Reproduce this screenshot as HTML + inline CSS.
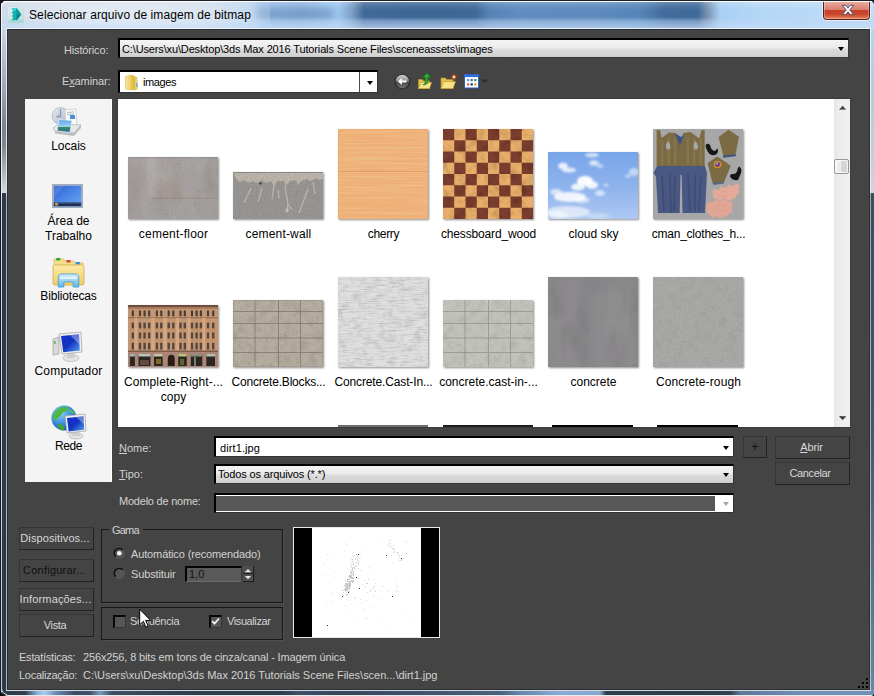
<!DOCTYPE html>
<html lang="pt-BR">
<head>
<meta charset="utf-8">
<title>Selecionar arquivo de imagem de bitmap</title>
<style>
html,body{margin:0;padding:0;}
body{width:874px;height:696px;position:relative;overflow:hidden;background:#444;font-family:"Liberation Sans",sans-serif;font-size:11px;color:#d4d4d4;}
.abs{position:absolute;}
#frame{position:absolute;left:0;top:0;width:874px;height:696px;background:#444;overflow:hidden;}
/* title bar */
#titlebar{position:absolute;left:0;top:0;width:874px;height:30px;
 background:linear-gradient(90deg,#cfdbe8 0px,#d3deea 60px,#cad9ea 200px,#b5d0ee 250px,#98bfea 262px,#8db4e0 300px,#9cc6f0 338px,#7d9fc6 352px,#41699a 364px,#3c6695 430px,#3e6998 475px,#5784b8 490px,#5f8dc0 520px,#5c8abd 600px,#5585b8 640px,#416c9b 665px,#3f6a99 698px,#7a95b3 708px,#a8cff4 720px,#b4d7f6 760px,#c0dcf6 874px);}
#titleshade{position:absolute;left:0;top:0;width:874px;height:30px;
 background:linear-gradient(180deg,rgba(255,255,255,.3) 0px,rgba(255,255,255,.1) 5px,rgba(255,255,255,0) 10px,rgba(190,215,245,0) 17px,rgba(190,215,245,.45) 21px,rgba(195,220,248,.75) 28px);}
#titlesmudge{position:absolute;left:256px;top:8px;width:78px;height:12px;border-radius:6px;background:rgba(90,120,160,.38);filter:blur(3px);}
#titleglow{position:absolute;left:20px;top:2px;width:250px;height:26px;background:radial-gradient(ellipse at center,rgba(255,255,255,.45) 0%,rgba(255,255,255,.3) 50%,rgba(255,255,255,0) 100%);}
#title{position:absolute;left:29px;top:8px;font-size:12px;color:#000;white-space:nowrap;letter-spacing:0.1px;}
/* client */
#client{position:absolute;left:8px;top:30px;width:861px;height:659px;background:#444444;}
.lbl{position:absolute;white-space:nowrap;color:#d2d2d2;font-size:11px;line-height:13px;}
.btn{position:absolute;box-sizing:border-box;border:1px solid #343434;border-right-color:#232323;border-bottom-color:#232323;background:#444;color:#d8d8d8;text-align:center;font-size:11px;white-space:nowrap;}
.combo{position:absolute;box-sizing:border-box;border:2px solid #000;border-right:1px solid #343434;border-bottom:1px solid #343434;}
.arrow{position:absolute;width:0;height:0;border-left:3.5px solid transparent;border-right:3.5px solid transparent;border-top:4px solid #000;}
.sb{position:absolute;left:25px;width:87px;text-align:center;color:#000;font-size:12px;line-height:15px;}
.item{position:absolute;width:105px;text-align:center;color:#000;font-size:12px;line-height:15px;white-space:nowrap;}
.th{position:absolute;box-shadow:1px 1px 2px rgba(0,0,0,.45);}
</style>
</head>
<body>
<div id="frame">
<div id="titlebar"></div>
<div id="titlesmudge"></div>
<div id="titleshade"></div>
<div id="titleglow"></div>
<div id="title">Selecionar arquivo de imagem de bitmap</div>
<div id="client"></div>
<!-- window frame borders -->
<div class="abs" style="left:0;top:30px;width:8px;height:666px;background:linear-gradient(180deg,#c4d4e6 0px,#9aa6b4 60px,#7a838f 95px,#7d8692 115px,#d4dae1 162px,#d8dde3 163px,#2d3a47 163.5px,#2c3946 666px);"></div>
<div class="abs" style="left:869px;top:30px;width:5px;height:666px;background:linear-gradient(180deg,#b5d3f1 0px,#b9c9da 60px,#c3ccd6 120px,#d0d5db 163px,#3e4c5c 163.5px,#45566a 400px,#6a86a5 666px);"></div>
<div class="abs" style="left:0;top:690px;width:874px;height:5px;background:linear-gradient(90deg,#2c3946 0px,#2f3e4e 25px,#8fb6e0 38px,#a9cdf2 45px,#6d8eb3 55px,#3b4c60 75px,#3f5268 90px,#7c9cc0 100px,#3d4f64 112px,#2f3d4c 200px,#2e3c4b 280px,#3e5167 300px,#36465a 340px,#4a617c 500px,#6787ab 520px,#89acd4 560px,#86a8cf 600px,#2f3d4d 606px,#2e3b4a 700px,#32414f 730px,#5c7797 740px,#6f8fb3 800px,#7091b6 874px);"></div>
<!-- inner/outer edge lines -->
<div class="abs" style="left:0;top:0;width:1px;height:696px;background:#1a1d21;"></div>
<div class="abs" style="left:1px;top:2px;width:1px;height:692px;background:linear-gradient(180deg,#f4f8fc 0,#e8edf3 190px,#cfd6de 200px,#c4ccd6 692px);"></div>
<div class="abs" style="left:0;top:0;width:874px;height:1px;background:#20242a;"></div>
<div class="abs" style="left:2px;top:1px;width:872px;height:1px;background:rgba(255,255,255,.85);"></div>
<div class="abs" style="left:6px;top:29px;width:1px;height:661px;background:linear-gradient(180deg,#eef3f8 0,#dfe5ec 160px,#aeb8c4 170px,#a9b4c0 662px);"></div>
<div class="abs" style="left:870px;top:29px;width:1px;height:661px;background:linear-gradient(180deg,#f0f6fc 0,#e6ebf1 162px,#9aa8b8 166px,#b9c6d4 662px);"></div>
<div class="abs" style="left:6px;top:28px;width:865px;height:1px;background:rgba(255,255,255,.7);"></div>
<div class="abs" style="left:6px;top:690px;width:865px;height:1px;background:#d3dbe4;"></div>
<div class="abs" style="left:2px;top:695px;width:872px;height:1px;background:#e6ebf0;"></div>
<div class="abs" style="left:7px;top:29px;width:863px;height:661px;box-sizing:border-box;border:1px solid #2b2f34;pointer-events:none;"></div>
<!-- corner roundings -->
<svg class="abs" style="left:0;top:0" width="8" height="8" viewBox="0 0 8 8"><path d="M0 0H7C3 1 1 3 0 7Z" fill="#14171b"/><path d="M1.5 7C2 4 4 2 7 1.5" fill="none" stroke="#fff" stroke-width="1"/></svg>
<svg class="abs" style="left:0;top:688px" width="8" height="8" viewBox="0 0 8 8"><path d="M0 8H7C3 7 1 5 0 1Z" fill="#0c0d0f"/><path d="M1.5 1C2 4 4 6 7 6.5" fill="none" stroke="#d5dbe3" stroke-width="1"/></svg>
<svg class="abs" style="left:866px;top:0" width="8" height="8" viewBox="0 0 8 8"><path d="M8 0H4C6 1 7.5 2 8 4Z" fill="#14171b"/></svg>
<svg class="abs" style="left:866px;top:688px" width="8" height="8" viewBox="0 0 8 8"><path d="M8 8V6L6 8Z" fill="#101114"/></svg>
<!-- close button -->
<div class="abs" style="left:822px;top:2px;width:49px;height:19px;border-radius:0 0 5px 5px;background:rgba(255,255,255,.6);"></div>
<div class="abs" style="left:823px;top:1px;width:47px;height:19px;box-sizing:border-box;border:1px solid #5b1d12;border-top:none;border-radius:0 0 4px 4px;background:linear-gradient(180deg,#eeb3a6 0px,#e29a8b 4px,#d9806e 8.5px,#c7402b 9px,#c9442d 13px,#d9694a 16px,#e58a5e 18px);"></div>
<div class="abs" style="left:824px;top:1px;width:45px;height:18px;border:1px solid rgba(255,255,255,.3);border-top:none;border-radius:0 0 3px 3px;box-sizing:border-box;"></div>
<svg class="abs" style="left:841px;top:4px" width="14" height="12" viewBox="0 0 14 12"><path d="M1.300 1.200h3.500l2.200 2.700 2.200-2.700h3.500L8.900 5.900l3.800 4.700H9.200L7 7.900 4.800 10.600H1.300L5.100 5.900z" fill="#f5f5f5" stroke="#414c66" stroke-width=".9" stroke-linejoin="round"/></svg>
<div class="abs" style="left:8px;top:0;width:862px;height:1px;background:#1c2026;"></div>
<div class="abs" style="left:8px;top:1px;width:862px;height:1px;background:rgba(255,255,255,.88);"></div>
<!-- app icon -->
<svg class="abs" style="left:8px;top:7px" width="16" height="16" viewBox="0 0 16 16">
<defs><linearGradient id="ig" x1="0" y1="0" x2="1" y2="1"><stop offset="0" stop-color="#d9ecec"/><stop offset="1" stop-color="#c0dedc"/></linearGradient></defs>
<rect width="16" height="16" fill="url(#ig)"/>
<rect x="0" y="12.5" width="16" height="3.5" fill="#a9d5d1" opacity=".8"/>
<path d="M3.6 1.3h5.2l4.4 5.9-4.4 6H3.6l1.6-2.6-1.3-1.6 1.3-1.8-1.3-1.7 1.3-1.8z" fill="#14b3b3"/>
<path d="M8.8 1.3l4.4 5.9-4.4 6-1.2-2.600 1-3.4-1-3.500z" fill="#0e9c9f"/>
<path d="M3.6 1.3h5.2l-1.2 2.400h-2.400z" fill="#3fd0cc"/>
<path d="M13.200 7.200l-4.400 6 .3-6z" fill="#0b8488"/>
</svg>
<!-- Historico row -->
<div class="lbl" style="left:64px;top:44px;letter-spacing:-0.15px;">Histórico:</div>
<div class="combo" style="left:118px;top:38px;width:731px;height:20px;background:linear-gradient(180deg,#f4f4f4 0,#ebebeb 45%,#dcdcdc 55%,#cfcfcf 100%);"></div>
<div class="lbl" style="left:122px;top:43px;color:#000;letter-spacing:-0.14px;">C:\Users\xu\Desktop\3ds Max 2016 Tutorials Scene Files\sceneassets\images</div>
<div class="arrow" style="left:838px;top:47px;"></div>
<!-- Examinar row -->
<div class="lbl" style="left:62px;top:75px;letter-spacing:-0.12px;">E<u>x</u>aminar:</div>
<div class="combo" style="left:118px;top:70px;width:260px;height:23px;background:#fff;"></div>
<div class="abs" style="left:359px;top:72px;width:1px;height:20px;background:#4a4a4a;"></div>
<div class="arrow" style="left:367px;top:81px;"></div>
<svg class="abs" style="left:124px;top:74px" width="16" height="17" viewBox="0 0 16 17">
<defs><linearGradient id="fg1" x1="0" y1="0" x2="1" y2="0"><stop offset="0" stop-color="#f8e9a0"/><stop offset="1" stop-color="#e9c650"/></linearGradient></defs>
<path d="M1.500 2.500L8 1v15L1.500 15z" fill="url(#fg1)" stroke="#d9b84a" stroke-width=".6"/>
<path d="M8 1l3 1.200V16L8 16z" fill="#e3bd45"/>
<path d="M11 2.800l2.200.8v11.600L11 16z" fill="#f3dc85" stroke="#c9a63a" stroke-width=".5"/>
<rect x="12.200" y="9" width="1.300" height="4" fill="#58a6e8"/>
</svg>
<div class="lbl" style="left:143px;top:76px;color:#000;letter-spacing:-0.4px;">images</div>
<!-- toolbar icons -->
<svg class="abs" style="left:394px;top:73px" width="17" height="17" viewBox="0 0 17 17">
<defs><linearGradient id="bk" x1="0" y1="0" x2="0" y2="1"><stop offset="0" stop-color="#d0d0d0"/><stop offset=".42" stop-color="#9a9a9a"/><stop offset=".55" stop-color="#454545"/><stop offset="1" stop-color="#7a7a7a"/></linearGradient></defs>
<circle cx="8.300" cy="8.500" r="7.300" fill="url(#bk)" stroke="#2c2c2c" stroke-width="1.100"/>
<path d="M3.800 8.500l4-3.600v2.500h4.700v2.200H7.800v2.500z" fill="#fff"/>
</svg>
<svg class="abs" style="left:417px;top:72px" width="16" height="18" viewBox="0 0 16 18">
<path d="M1.500 7.500h4l1 1.500h6V16.500h-11z" fill="#e6c24e" stroke="#b8932c" stroke-width=".7"/>
<path d="M1.500 16.500L4 10.500h10.500L12.500 16.500z" fill="#f8e387" stroke="#c29c34" stroke-width=".7"/>
<path d="M9.800 1L5.800 5.500h2.500V10c0 1.500-1 2.500-2.400 2.800 3 .2 5-1 5-3.300V5.500h2.700z" fill="#2fae2f" stroke="#14761a" stroke-width=".7"/>
</svg>
<svg class="abs" style="left:440px;top:72px" width="18" height="18" viewBox="0 0 18 18">
<path d="M1 6h4.500l1 1.500H13V16.500H1z" fill="#e6c24e" stroke="#b8932c" stroke-width=".7"/>
<path d="M1 16.500l2.500-7H15.500L13 16.500z" fill="#f8e387" stroke="#c29c34" stroke-width=".7"/>
<path d="M14 1.500l.7 2.100 2-.8-1.200 1.800 1.800 1.200-2.100.2.200 2.200-1.400-1.700-1.500 1.600.3-2.200-2.100-.2 1.800-1.300-1.200-1.800 2 .8z" fill="#ee4f1c"/>
<circle cx="14" cy="5" r="1.200" fill="#fff3b0"/>
</svg>
<svg class="abs" style="left:464px;top:74px" width="26" height="15" viewBox="0 0 26 15">
<rect x=".5" y=".5" width="14" height="13.500" rx="1" fill="#fdfdfd" stroke="#2a62c8" stroke-width="1"/>
<rect x=".5" y=".5" width="14" height="2.600" fill="#2f6fd8"/>
<rect x="3" y="5" width="2.200" height="2.200" fill="#8a8ac4"/><rect x="6.600" y="5" width="2.200" height="2.200" fill="#2a6ad0"/><rect x="10.200" y="5" width="2.200" height="2.200" fill="#2a9a3a"/>
<rect x="3" y="9.300" width="2.200" height="2.200" fill="#e0662a"/><rect x="6.600" y="9.300" width="2.200" height="2.200" fill="#1a2a9a"/><rect x="10.200" y="9.300" width="2.200" height="2.200" fill="#d9a022"/>
<path d="M17 5.500h7L20.500 9z" fill="#2c2c2c"/>
</svg>
<!-- places sidebar -->
<div class="abs" style="left:25px;top:99px;width:87px;height:383px;background:#f4f4f4;box-shadow:inset -1px 0 0 #fff;"></div>
<div class="sb" style="top:139px;">Locais</div>
<div class="sb" style="top:214px;">Área de<br>Trabalho</div>
<div class="sb" style="top:289px;letter-spacing:-0.15px;">Bibliotecas</div>
<div class="sb" style="top:364px;letter-spacing:0.2px;">Computador</div>
<div class="sb" style="top:439px;letter-spacing:-0.4px;">Rede</div>
<!-- Locais icon 52-82 x 106-136 -->
<svg class="abs" style="left:51px;top:105px" width="33" height="33" viewBox="0 0 33 33">
<defs><linearGradient id="ck" x1="0" y1="0" x2="1" y2="1"><stop offset="0" stop-color="#e6ecf3"/><stop offset="1" stop-color="#aab6c6"/></linearGradient>
<linearGradient id="ph" x1="0" y1="0" x2="0" y2="1"><stop offset="0" stop-color="#5aa6ea"/><stop offset=".55" stop-color="#9ed0f4"/><stop offset=".6" stop-color="#3f8a4a"/><stop offset="1" stop-color="#2f6fb8"/></linearGradient></defs>
<circle cx="9.500" cy="11" r="8.500" fill="url(#ck)" stroke="#b9c3cf" stroke-width="1"/>
<path d="M9.500 4v7.500h-4" fill="none" stroke="#8b98aa" stroke-width="1.300"/>
<path d="M14 5l11-1 1 18-11 2z" fill="#fafafa" stroke="#c6c6c6" stroke-width=".7"/>
<path d="M16 7.500l7-.6M16 9.500l7-.6" stroke="#9aa4b0" stroke-width=".8"/>
<rect x="19" y="10" width="5" height="4" fill="#4b8fd8"/>
<path d="M2 23l6-4 22 1-7 8-19-2z" fill="#e9e9e9" stroke="#aeaeae" stroke-width=".7"/>
<path d="M4 26l19 2 7-8v3l-7 8-19-2.500z" fill="#bdbdbd"/>
<path d="M8 14.500l13 1-2 12-13-1.500z" fill="url(#ph)" stroke="#dfe8f0" stroke-width=".8"/>
</svg>
<!-- Desktop icon 52-84 x 183-208 -->
<svg class="abs" style="left:52px;top:184px" width="31" height="24" viewBox="0 0 34 27" preserveAspectRatio="none">
<defs><linearGradient id="dk" x1="0" y1="0" x2="1" y2="1"><stop offset="0" stop-color="#2f5fd0"/><stop offset=".5" stop-color="#4b86e6"/><stop offset="1" stop-color="#6aa5f2"/></linearGradient></defs>
<rect x=".5" y=".5" width="33" height="26" fill="#aab8cc" stroke="#9fa8b8"/>
<rect x="2" y="2" width="30" height="23" fill="url(#dk)"/>
<path d="M2 2h12L2 14z" fill="#fff" opacity=".12"/>
<rect x="2" y="20.500" width="30" height="4.500" fill="#1d2f52"/>
<rect x="2" y="20.500" width="30" height="1.500" fill="#5a78a8" opacity=".7"/>
<circle cx="5" cy="22.700" r="1.700" fill="#e9a13a"/><circle cx="5" cy="22.700" r=".8" fill="#4fb04a"/>
</svg>
<!-- Libraries icon 52-84 x 258-290 -->
<svg class="abs" style="left:51px;top:256px" width="35" height="34" viewBox="0 0 34 34" preserveAspectRatio="none">
<defs><linearGradient id="lf" x1="0" y1="0" x2="0" y2="1"><stop offset="0" stop-color="#fbeaa6"/><stop offset="1" stop-color="#f0cf6a"/></linearGradient>
<linearGradient id="lb" x1="0" y1="0" x2="0" y2="1"><stop offset="0" stop-color="#d9f0fb"/><stop offset="1" stop-color="#5fb4e8"/></linearGradient></defs>
<path d="M3 3h9l2 2h8l2 2h7v6H3z" fill="#f5de8c" stroke="#d9b95a" stroke-width=".8"/>
<rect x="5" y="2" width="4" height="2.500" fill="#2fa83a"/><rect x="15" y="4" width="4" height="2.500" fill="#d64a3a"/><rect x="24" y="6" width="4" height="2.500" fill="#2f8fe0"/>
<rect x="2" y="9" width="30" height="20" rx="1.500" fill="url(#lf)" stroke="#d6b352" stroke-width=".9"/>
<path d="M7 31V21c0-2 1.500-3 3.500-3h13c2 0 3.500 1 3.500 3v10h-5.500v-5h-9v5z" fill="url(#lb)" stroke="#4a9fd8" stroke-width=".9"/>
<path d="M9 22h16" stroke="#fff" stroke-width="1.500" opacity=".8"/>
</svg>
<!-- Computer icon 48-88 x 331-361 -->
<svg class="abs" style="left:50px;top:330px" width="38" height="33" viewBox="0 0 38 33">
<defs><linearGradient id="scr" x1="0" y1="0" x2="1" y2="1"><stop offset="0" stop-color="#1a2fd0"/><stop offset=".5" stop-color="#1034c0"/><stop offset="1" stop-color="#5aa0f0"/></linearGradient></defs>
<path d="M3 9l6-2v17l-6 1z" fill="#d9d9d9" stroke="#9e9e9e" stroke-width=".7"/><rect x="4" y="11" width="1.500" height="3" fill="#3fbf3f"/>
<ellipse cx="21" cy="28" rx="8" ry="3.500" fill="#e4e4e4" stroke="#b5b5b5" stroke-width=".7"/>
<path d="M18 22h6l1 6h-8z" fill="#cfcfcf"/>
<path d="M9 4l22-2 1 20-20 2z" fill="#f0f0f0" stroke="#a8a8a8" stroke-width=".8"/>
<path d="M11 6l18-1.700.8 16.200-16.500 1.700z" fill="url(#scr)"/>
<path d="M20 5.200l9-.9.500 10z" fill="#fff" opacity=".35"/>
</svg>
<!-- Network icon 48-88 x 405-438 -->
<svg class="abs" style="left:50px;top:404px" width="38" height="36" viewBox="0 0 38 36">
<defs><radialGradient id="gl" cx=".35" cy=".3" r=".8"><stop offset="0" stop-color="#8fd0f8"/><stop offset=".6" stop-color="#2f86d8"/><stop offset="1" stop-color="#1a4fa0"/></radialGradient></defs>
<circle cx="14" cy="14" r="12.500" fill="url(#gl)"/>
<path d="M5 8c3-4 8-6 12-5 2 2 0 4-3 5s-2 4-5 5-3 5-5 3-1-5 1-8z" fill="#4fb83f"/>
<path d="M8 20c2-1 5 0 6 3s-1 4-3 3-4-3-3-6z" fill="#3fa53a"/>
<path d="M18 5c3 0 6 2 7 5l-4-1z" fill="#5cc04a"/>
<ellipse cx="26" cy="32" rx="7" ry="3" fill="#e4e4e4" stroke="#b5b5b5" stroke-width=".7"/>
<path d="M23 27h6l1 5h-8z" fill="#cfcfcf"/>
<path d="M15 12l20-2 1 17-19 2z" fill="#f0f0f0" stroke="#a8a8a8" stroke-width=".8"/>
<path d="M17 14l16.500-1.700.7 13.500-15.500 1.700z" fill="url(#scr)"/>
<path d="M26 13l7.500-.7.400 8z" fill="#fff" opacity=".35"/>
</svg>

<!-- file list -->
<div class="abs" style="left:117px;top:98px;width:734px;height:330px;background:#3c3c3c;"></div>
<div class="abs" style="left:118px;top:99px;width:732px;height:328px;background:#fff;"></div>
<!-- scrollbar -->
<div class="abs" style="left:834px;top:99px;width:16px;height:328px;background:linear-gradient(90deg,#e6e6e6 0,#ededed 30%,#f0f0f0 100%);"></div>
<div class="abs" style="left:834px;top:159px;width:15px;height:15px;box-sizing:border-box;border:1px solid #979797;border-radius:2px;background:linear-gradient(90deg,#f6f6f6 0,#e9e9ea 45%,#d3d3d6 55%,#d8d8db 100%);box-shadow:inset 0 0 0 1px rgba(255,255,255,.8);"></div>
<svg class="abs" style="left:839px;top:105px" width="8" height="5" viewBox="0 0 8 5"><defs><linearGradient id="ag" x1="0" y1="0" x2="1" y2="1"><stop offset="0" stop-color="#111"/><stop offset="1" stop-color="#777"/></linearGradient></defs><path d="M0 4.800L3.700 .7 7.400 4.800z" fill="url(#ag)"/></svg>
<svg class="abs" style="left:839px;top:416px" width="8" height="5" viewBox="0 0 8 5"><path d="M0 .2L3.700 4.300 7.400 .2z" fill="url(#ag)"/></svg>
<svg width="0" height="0" style="position:absolute"><defs>
<filter id="nz" x="0" y="0" width="100%" height="100%"><feTurbulence type="fractalNoise" baseFrequency="0.9" numOctaves="2" seed="3" result="t"/><feColorMatrix type="matrix" values="0 0 0 0 0  0 0 0 0 0  0 0 0 0 0  .6 .6 .6 0 -.75"/></filter>
<filter id="nzw" x="0" y="0" width="100%" height="100%"><feTurbulence type="fractalNoise" baseFrequency="0.9" numOctaves="2" seed="5" result="t"/><feColorMatrix type="matrix" values="0 0 0 0 1  0 0 0 0 1  0 0 0 0 1  .6 .6 .6 0 -.75"/></filter>
<filter id="nzl" x="0" y="0" width="100%" height="100%"><feTurbulence type="fractalNoise" baseFrequency="0.06 0.03" numOctaves="3" seed="7"/><feColorMatrix type="matrix" values="0 0 0 0 1  0 0 0 0 1  0 0 0 0 1  .9 .9 0 0 -.8"/></filter>
<filter id="nzd" x="0" y="0" width="100%" height="100%"><feTurbulence type="fractalNoise" baseFrequency="0.05 0.025" numOctaves="3" seed="11"/><feColorMatrix type="matrix" values="0 0 0 0 0  0 0 0 0 0  0 0 0 0 0  .9 .9 0 0 -.85"/></filter>
<filter id="nzm" x="0" y="0" width="100%" height="100%"><feTurbulence type="fractalNoise" baseFrequency="0.12" numOctaves="3" seed="21"/><feColorMatrix type="matrix" values="0 0 0 0 0  0 0 0 0 0  0 0 0 0 0  1.2 1.2 0 0 -1.1"/></filter>
<filter id="grain" x="0" y="0" width="100%" height="100%"><feTurbulence type="fractalNoise" baseFrequency="0.012 0.55" numOctaves="2" seed="4"/><feColorMatrix type="matrix" values="0 0 0 0 .86  0 0 0 0 .52  0 0 0 0 .25  3 3 0 0 -2.75"/></filter>
<filter id="streak" x="0" y="0" width="100%" height="100%"><feTurbulence type="fractalNoise" baseFrequency="0.08 0.9" numOctaves="2" seed="9"/><feColorMatrix type="matrix" values="0 0 0 0 .3  0 0 0 0 .3  0 0 0 0 .3  1.4 1.4 0 0 -1.3"/></filter>
<filter id="b04"><feGaussianBlur stdDeviation="0.45"/></filter>
<filter id="b1"><feGaussianBlur stdDeviation="1"/></filter>
<filter id="b3" x="-30%" y="-30%" width="160%" height="160%"><feGaussianBlur stdDeviation="3"/></filter>
</defs></svg>
<svg class="th" style="left:128px;top:157px" width="90" height="62" viewBox="0 0 90 62" preserveAspectRatio="none"><rect width="90" height="62" fill="#a5a09e"/><g filter="url(#b3)"><rect x="20" y="-4" width="7" height="44" fill="#b9b4b2" opacity=".8"/><rect x="78" y="10" width="16" height="30" fill="#9a938e" opacity=".7"/><rect x="28" y="22" width="26" height="22" fill="#a39790" opacity=".75"/><rect x="-5" y="20" width="16" height="40" fill="#9f9894" opacity=".6"/><rect x="54" y="-4" width="20" height="34" fill="#aaa6a6" opacity=".6"/><rect x="10" y="46" width="80" height="14" fill="#a29e9d" opacity=".6"/></g><rect x="24" y="40.500" width="66" height="1.500" fill="#968880" opacity=".6" filter="url(#b04)"/><rect x="0" y="0" width="90" height="1.500" fill="#8f8b8b" opacity=".5"/><rect width="90" height="62" filter="url(#nzl)" opacity=".2"/><rect width="90" height="62" filter="url(#nz)" opacity=".15"/></svg>
<div class="item" style="left:121px;top:227px;letter-spacing:0.23px;">cement-floor</div>
<svg class="th" style="left:233px;top:172px" width="90" height="47" viewBox="0 0 90 47" preserveAspectRatio="none"><rect width="90" height="47" fill="#9a9794"/><path d="M0 0h90v7l-4 1-3-2-5 3-4-2-6 2-3 4-2-5-6 1-4 5-2-5-7 0-3 6-3-6-5 2-4-3-6 3-3-2-5 2-4-3-4 2-3-2z" fill="#bfb7ad" filter="url(#b04)"/><rect width="90" height="1" fill="#85807b" opacity=".8"/><g filter="url(#b04)"><path d="M11 31l7-15M25 30l4-14M39 27l2-13M52 14l3 18l-1 9M55 32l4 6M66 41l9-24M80 10l2 12M45 18l1 8" stroke="#c7c0b6" stroke-width="1.300" fill="none" opacity=".85"/><circle cx="54" cy="38" r="1.800" fill="#cfc8be" opacity=".8"/></g><circle cx="27.500" cy="11.500" r="1.100" fill="#2a2522"/><rect width="90" height="47" filter="url(#nz)" opacity=".2"/></svg>
<div class="item" style="left:226px;top:227px;letter-spacing:0.16px;">cement-wall</div>
<svg class="th" style="left:338px;top:129px" width="90" height="90" viewBox="0 0 90 90" preserveAspectRatio="none"><rect width="90" height="90" fill="#efb078"/><rect width="90" height="90" filter="url(#grain)" opacity=".8"/><rect x="0" y="42" width="90" height="1.200" fill="#de9758" opacity=".75"/><rect x="0" y="43.200" width="90" height="1" fill="#f8c697" opacity=".6"/><rect x="0" y="0" width="90" height="90" fill="none" stroke="#e7a468" stroke-width="1" opacity=".6"/></svg>
<div class="item" style="left:331px;top:227px;letter-spacing:-0.3px;">cherry</div>
<svg class="th" style="left:443px;top:129px" width="90" height="90" viewBox="0 0 90 90" preserveAspectRatio="none"><rect width="90" height="90" fill="#e8ae6a"/><g filter="url(#b04)"><rect x="0.00" y="0.00" width="11.25" height="11.25" fill="#7a3d2d"/><rect x="22.50" y="0.00" width="11.25" height="11.25" fill="#7a3d2d"/><rect x="45.00" y="0.00" width="11.25" height="11.25" fill="#7a3d2d"/><rect x="67.50" y="0.00" width="11.25" height="11.25" fill="#7a3d2d"/><rect x="11.25" y="11.25" width="11.25" height="11.25" fill="#7a3d2d"/><rect x="33.75" y="11.25" width="11.25" height="11.25" fill="#7a3d2d"/><rect x="56.25" y="11.25" width="11.25" height="11.25" fill="#7a3d2d"/><rect x="78.75" y="11.25" width="11.25" height="11.25" fill="#7a3d2d"/><rect x="0.00" y="22.50" width="11.25" height="11.25" fill="#7a3d2d"/><rect x="22.50" y="22.50" width="11.25" height="11.25" fill="#7a3d2d"/><rect x="45.00" y="22.50" width="11.25" height="11.25" fill="#7a3d2d"/><rect x="67.50" y="22.50" width="11.25" height="11.25" fill="#7a3d2d"/><rect x="11.25" y="33.75" width="11.25" height="11.25" fill="#7a3d2d"/><rect x="33.75" y="33.75" width="11.25" height="11.25" fill="#7a3d2d"/><rect x="56.25" y="33.75" width="11.25" height="11.25" fill="#7a3d2d"/><rect x="78.75" y="33.75" width="11.25" height="11.25" fill="#7a3d2d"/><rect x="0.00" y="45.00" width="11.25" height="11.25" fill="#7a3d2d"/><rect x="22.50" y="45.00" width="11.25" height="11.25" fill="#7a3d2d"/><rect x="45.00" y="45.00" width="11.25" height="11.25" fill="#7a3d2d"/><rect x="67.50" y="45.00" width="11.25" height="11.25" fill="#7a3d2d"/><rect x="11.25" y="56.25" width="11.25" height="11.25" fill="#7a3d2d"/><rect x="33.75" y="56.25" width="11.25" height="11.25" fill="#7a3d2d"/><rect x="56.25" y="56.25" width="11.25" height="11.25" fill="#7a3d2d"/><rect x="78.75" y="56.25" width="11.25" height="11.25" fill="#7a3d2d"/><rect x="0.00" y="67.50" width="11.25" height="11.25" fill="#7a3d2d"/><rect x="22.50" y="67.50" width="11.25" height="11.25" fill="#7a3d2d"/><rect x="45.00" y="67.50" width="11.25" height="11.25" fill="#7a3d2d"/><rect x="67.50" y="67.50" width="11.25" height="11.25" fill="#7a3d2d"/><rect x="11.25" y="78.75" width="11.25" height="11.25" fill="#7a3d2d"/><rect x="33.75" y="78.75" width="11.25" height="11.25" fill="#7a3d2d"/><rect x="56.25" y="78.75" width="11.25" height="11.25" fill="#7a3d2d"/><rect x="78.75" y="78.75" width="11.25" height="11.25" fill="#7a3d2d"/></g><rect width="90" height="90" filter="url(#nzm)" opacity=".22"/></svg>
<div class="item" style="left:436px;top:227px;letter-spacing:-0.16px;">chessboard_wood</div>
<svg class="th" style="left:548px;top:152px" width="90" height="67" viewBox="0 0 90 67" preserveAspectRatio="none"><defs><linearGradient id="sky" x1="0" y1="0" x2="0" y2="1"><stop offset="0" stop-color="#78a5e9"/><stop offset=".55" stop-color="#8fb4ed"/><stop offset="1" stop-color="#aec8f2"/></linearGradient>
<filter id="bl" x="-20%" y="-20%" width="140%" height="140%"><feGaussianBlur stdDeviation="1.300"/></filter></defs>
<rect width="90" height="67" fill="url(#sky)"/>
<g filter="url(#bl)" fill="#fff">
<ellipse cx="15" cy="14" rx="5" ry="3.500" opacity=".8"/><ellipse cx="21" cy="18" rx="7" ry="2.500" opacity=".75"/><ellipse cx="44" cy="3" rx="7" ry="2.500" opacity=".6"/><ellipse cx="46" cy="11" rx="5" ry="3" opacity=".65"/><ellipse cx="52" cy="14" rx="3" ry="2" opacity=".5"/>
<ellipse cx="86" cy="20" rx="5" ry="4" opacity=".5"/><ellipse cx="80" cy="24" rx="3" ry="2" opacity=".4"/>
<ellipse cx="37" cy="29" rx="8" ry="5" opacity=".95"/><ellipse cx="44" cy="33" rx="6" ry="4" opacity=".85"/><ellipse cx="30" cy="35" rx="7" ry="3.500" opacity=".85"/><ellipse cx="52" cy="41" rx="5" ry="3" opacity=".6"/><ellipse cx="58" cy="33" rx="2.500" ry="1.500" opacity=".55"/>
<ellipse cx="22" cy="45" rx="16" ry="5" opacity=".85"/><ellipse cx="8" cy="40" rx="6" ry="3" opacity=".65"/><ellipse cx="34" cy="48" rx="8" ry="3" opacity=".6"/>
<ellipse cx="20" cy="60" rx="22" ry="6" opacity=".6"/><ellipse cx="10" cy="63" rx="10" ry="4" opacity=".5"/><ellipse cx="50" cy="64" rx="12" ry="3" opacity=".3"/>
</g></svg>
<div class="item" style="left:541px;top:227px;">cloud sky</div>
<svg class="th" style="left:653px;top:129px" width="90" height="90" viewBox="0 0 90 90" preserveAspectRatio="none"><rect width="90" height="90" fill="#a7a7a7"/><g filter="url(#b04)">
<g transform="translate(3.6 0) scale(1.064 1) translate(-3.6 0)"><path d="M3.600 1l3.200 0 1.500 8 7-5.500 6 .5 4.500 12 3-12 6.500-1 8.500 6.500 2-8.500h3v36H3.600z" fill="#7c6b45"/>
<path d="M9 12v24M15 8v28M21 8v28M33 8v28M39 8v28M45 10v26" stroke="#8f7e55" stroke-width="2" opacity=".6"/>
<path d="M20.500 4l5 13 4.500-12.500-3 3.500-2-1z" fill="#3a5580"/>
<path d="M14 12c1.800 2 3 4.500 2.400 7-.5 2-3.200 2-3.800 0-.6-2.500.2-5 1.400-7z M40 12c1.800 2 3 4.500 2.400 7-.5 2-3.200 2-3.800 0-.6-2.500.2-5 1.400-7z" fill="#a7a7a7"/>
</g>
<path d="M4 37h48l2 7-2 40H29.500l-.8-38-1.200 0-.8 38H5L3 48l-2.500-4z" fill="#4a5983"/>
<path d="M9 46l2 36M17 44l1 40M22 46l-1 36M35 44l2 38M42 46l0 36M48 46l-2 36" stroke="#3b486f" stroke-width="1.600" fill="none" opacity=".8"/>
<path d="M65.500 8l10-7.300 10.500 7-3.500 18-12 1.500z" fill="#7c6b45"/><path d="M70 26.500l13-1.200-.3 2-12.500 1.500z" fill="#3a5580"/>
<path d="M54.600 34l9.500-6.500 10 6.500 3.500 3-6.500 16-11.500 1.500z" fill="#7c6b45"/><path d="M60 54l11-1.300 0 1.800-10.500 1.500z" fill="#3a5580" opacity=".8"/>
<circle cx="64.600" cy="35.500" r="3.800" fill="#d98a2e"/><circle cx="64.600" cy="35.500" r="2.400" fill="#5b3f8f"/><circle cx="64" cy="34.500" r="1" fill="#c9b0a0"/>
<path d="M53 15.500c2-1.500 4-.5 4.500 2s2 4 4.500 4.500l2.500-2.500c1 2 .5 4.500-1.500 6-3 1.500-6.500.5-8-2.500s-3-5-2-7.500z" fill="#151515"/>
<path d="M86 37.500c2 1 3 3.500 2 6.500l-3 7c-3 .5-6-.5-7.500-2.500-1-2 0-3.500 2-3.500 3 .5 5-2 5-5z" fill="#151515"/>
<path d="M59 62l3-3 3 2 3-4 4 2 4-4 4 2 3-3 3 1 1 3-2 2 2 3-3 3-2 4-4 1-3 3-4-1-4 2-4-3-3-4z" fill="#e3a999" stroke="#a7a7a7" stroke-width=".8"/>
<path d="M53 76l3-4 4 1 3-3 4 2 4-3 4 3 3-1 2 4-1 4 1 4-4 2-2 3-4 0-3 2-4-2-4 1-3-4-3-2z" fill="#e0a595" stroke="#a7a7a7" stroke-width=".8"/>
<path d="M64 66l10 2M60 80l12 2M68 62l6 1M64 76l8 1" stroke="#cf8f80" stroke-width=".7" opacity=".6" fill="none"/>
</g></svg>
<div class="item" style="left:646px;top:227px;letter-spacing:-0.22px;">cman_clothes_h...</div>
<svg class="th" style="left:128px;top:305px" width="90" height="62" viewBox="0 0 90 62" preserveAspectRatio="none"><rect width="90" height="62" fill="#c49672"/><g filter="url(#b04)"><rect width="90" height="2" fill="#6e4c3c"/><rect y="2" width="90" height="2" fill="#a87c60"/><rect y="12.200" width="90" height="1.200" fill="#9a7056"/><rect y="24.500" width="90" height="1" fill="#b0855f" opacity=".6"/><rect y="35" width="90" height="1" fill="#b0855f" opacity=".6"/><rect x="6.5" y="13" width="2.9" height="33" fill="#d4a681"/><rect x="23.2" y="13" width="3.4" height="33" fill="#d4a681"/><rect x="35.2" y="13" width="3.5" height="33" fill="#d4a681"/><rect x="47.9" y="13" width="3.4" height="33" fill="#d4a681"/><rect x="59.4" y="13" width="3.4" height="33" fill="#d4a681"/><rect x="74.3" y="13" width="2.9" height="33" fill="#d4a681"/><rect x="3.7" y="5.300" width="2.200" height="6.200" rx="1.100" fill="#4a3c37"/><rect x="10.9" y="5.300" width="2.200" height="6.200" rx="1.100" fill="#4a3c37"/><rect x="15.5" y="5.300" width="2.200" height="6.200" rx="1.100" fill="#4a3c37"/><rect x="20.1" y="5.300" width="2.200" height="6.200" rx="1.100" fill="#4a3c37"/><rect x="27.8" y="5.300" width="2.200" height="6.200" rx="1.100" fill="#4a3c37"/><rect x="32.2" y="5.300" width="2.200" height="6.200" rx="1.100" fill="#4a3c37"/><rect x="39.6" y="5.300" width="2.200" height="6.200" rx="1.100" fill="#4a3c37"/><rect x="44.2" y="5.300" width="2.200" height="6.200" rx="1.100" fill="#4a3c37"/><rect x="51.4" y="5.300" width="2.200" height="6.200" rx="1.100" fill="#4a3c37"/><rect x="55.7" y="5.300" width="2.200" height="6.200" rx="1.100" fill="#4a3c37"/><rect x="62.9" y="5.300" width="2.200" height="6.200" rx="1.100" fill="#4a3c37"/><rect x="67.5" y="5.300" width="2.200" height="6.200" rx="1.100" fill="#4a3c37"/><rect x="71.8" y="5.300" width="2.200" height="6.200" rx="1.100" fill="#4a3c37"/><rect x="78.9" y="5.300" width="2.200" height="6.200" rx="1.100" fill="#4a3c37"/><rect x="84.1" y="5.300" width="2.200" height="6.200" rx="1.100" fill="#4a3c37"/><rect x="3.6" y="17.6" width="2.400" height="5.8" fill="#54463f"/><rect x="10.8" y="17.6" width="2.400" height="5.8" fill="#54463f"/><rect x="15.4" y="17.6" width="2.400" height="5.8" fill="#54463f"/><rect x="20.0" y="17.6" width="2.400" height="5.8" fill="#54463f"/><rect x="27.7" y="17.6" width="2.400" height="5.8" fill="#54463f"/><rect x="32.1" y="17.6" width="2.400" height="5.8" fill="#54463f"/><rect x="39.5" y="17.6" width="2.400" height="5.8" fill="#54463f"/><rect x="44.1" y="17.6" width="2.400" height="5.8" fill="#54463f"/><rect x="51.3" y="17.6" width="2.400" height="5.8" fill="#54463f"/><rect x="55.6" y="17.6" width="2.400" height="5.8" fill="#54463f"/><rect x="62.8" y="17.6" width="2.400" height="5.8" fill="#54463f"/><rect x="67.4" y="17.6" width="2.400" height="5.8" fill="#54463f"/><rect x="71.7" y="17.6" width="2.400" height="5.8" fill="#54463f"/><rect x="78.8" y="17.6" width="2.400" height="5.8" fill="#54463f"/><rect x="84.0" y="17.6" width="2.400" height="5.8" fill="#54463f"/><rect x="3.6" y="27.4" width="2.400" height="6.2" fill="#54463f"/><rect x="10.8" y="27.4" width="2.400" height="6.2" fill="#54463f"/><rect x="15.4" y="27.4" width="2.400" height="6.2" fill="#54463f"/><rect x="20.0" y="27.4" width="2.400" height="6.2" fill="#54463f"/><rect x="27.7" y="27.4" width="2.400" height="6.2" fill="#54463f"/><rect x="32.1" y="27.4" width="2.400" height="6.2" fill="#54463f"/><rect x="39.5" y="27.4" width="2.400" height="6.2" fill="#54463f"/><rect x="44.1" y="27.4" width="2.400" height="6.2" fill="#54463f"/><rect x="51.3" y="27.4" width="2.400" height="6.2" fill="#54463f"/><rect x="55.6" y="27.4" width="2.400" height="6.2" fill="#54463f"/><rect x="62.8" y="27.4" width="2.400" height="6.2" fill="#54463f"/><rect x="67.4" y="27.4" width="2.400" height="6.2" fill="#54463f"/><rect x="71.7" y="27.4" width="2.400" height="6.2" fill="#54463f"/><rect x="78.8" y="27.4" width="2.400" height="6.2" fill="#54463f"/><rect x="84.0" y="27.4" width="2.400" height="6.2" fill="#54463f"/><rect x="3.6" y="37.7" width="2.400" height="6.8" fill="#54463f"/><rect x="10.8" y="37.7" width="2.400" height="6.8" fill="#54463f"/><rect x="15.4" y="37.7" width="2.400" height="6.8" fill="#54463f"/><rect x="20.0" y="37.7" width="2.400" height="6.8" fill="#54463f"/><rect x="27.7" y="37.7" width="2.400" height="6.8" fill="#54463f"/><rect x="32.1" y="37.7" width="2.400" height="6.8" fill="#54463f"/><rect x="39.5" y="37.7" width="2.400" height="6.8" fill="#54463f"/><rect x="44.1" y="37.7" width="2.400" height="6.8" fill="#54463f"/><rect x="51.3" y="37.7" width="2.400" height="6.8" fill="#54463f"/><rect x="55.6" y="37.7" width="2.400" height="6.8" fill="#54463f"/><rect x="62.8" y="37.7" width="2.400" height="6.8" fill="#54463f"/><rect x="67.4" y="37.7" width="2.400" height="6.8" fill="#54463f"/><rect x="71.7" y="37.7" width="2.400" height="6.8" fill="#54463f"/><rect x="78.8" y="37.7" width="2.400" height="6.8" fill="#54463f"/><rect x="84.0" y="37.7" width="2.400" height="6.8" fill="#54463f"/><rect y="46" width="90" height="16" fill="#ab8576"/><rect y="45.500" width="90" height="1.500" fill="#7d5a4a"/><rect x="1.9" y="49" width="5" height="12" fill="#2b2820"/><rect x="1.9" y="49" width="5" height="2.500" fill="#a9b4b0"/><rect x="10.5" y="49" width="12" height="12" fill="#2b2820"/><rect x="10.5" y="49" width="12" height="2.500" fill="#b7c4ba"/><rect x="26" y="49" width="8.7" height="12" fill="#2b2820"/><rect x="26" y="49" width="8.7" height="2.500" fill="#c2c8a8"/><rect x="50.2" y="49" width="8.6" height="12" fill="#2b2820"/><rect x="50.2" y="49" width="8.6" height="2.500" fill="#bcc27a"/><rect x="62.8" y="49" width="11.5" height="12" fill="#2b2820"/><rect x="62.8" y="49" width="11.5" height="2.500" fill="#8a9080"/><rect x="78.3" y="49" width="8.7" height="12" fill="#2b2820"/><rect x="78.3" y="49" width="8.7" height="2.500" fill="#b4beb4"/><rect x="12" y="55" width="9" height="5" fill="#7a5a48" opacity=".7"/><rect x="28" y="54" width="5" height="5" fill="#a08a30" opacity=".7"/><rect x="52" y="54" width="4" height="6" fill="#8a8a40" opacity=".6"/><rect x="66" y="52" width="2" height="9" fill="#9aa090" opacity=".7"/><path d="M39.800 61v-7.500a3.450 3.800 0 0 1 6.900 0v7.500z" fill="#2a1c18"/></g></svg>
<div class="item" style="left:121px;top:375px;letter-spacing:0.09px;">Complete-Right-...<br><span style="letter-spacing:0">copy</span></div>
<svg class="th" style="left:233px;top:300px" width="90" height="67" viewBox="0 0 90 67" preserveAspectRatio="none"><rect width="90" height="67" fill="#b9b1a4"/><rect width="90" height="67" filter="url(#nzm)" opacity=".12"/><rect width="90" height="67" filter="url(#nz)" opacity=".18"/><g filter="url(#b04)"><rect x="21.5" y="0" width="1" height="67" fill="#7d7568" opacity=".75"/><rect x="45" y="0" width="1" height="67" fill="#7d7568" opacity=".75"/><rect x="67" y="0" width="1" height="67" fill="#7d7568" opacity=".75"/><rect x="0" y="11" width="90" height="1" fill="#7d7568" opacity=".75"/><rect x="0" y="23" width="90" height="1" fill="#7d7568" opacity=".75"/><rect x="0" y="37.5" width="90" height="1" fill="#7d7568" opacity=".75"/><rect x="0" y="52" width="90" height="1" fill="#7d7568" opacity=".75"/></g><rect width="90" height="67" fill="none" stroke="#8f877a" stroke-width="1.200" opacity=".6"/></svg>
<div class="item" style="left:226px;top:375px;letter-spacing:-0.2px;">Concrete.Blocks...</div>
<svg class="th" style="left:338px;top:277px" width="90" height="90" viewBox="0 0 90 90" preserveAspectRatio="none"><rect width="90" height="90" fill="#dddddd"/><rect width="90" height="90" filter="url(#streak)" opacity=".5"/><rect width="90" height="90" filter="url(#nzw)" opacity=".5"/><rect width="90" height="90" filter="url(#nzm)" opacity=".12"/></svg>
<div class="item" style="left:331px;top:375px;letter-spacing:-0.14px;">Concrete.Cast-In...</div>
<svg class="th" style="left:443px;top:300px" width="90" height="67" viewBox="0 0 90 67" preserveAspectRatio="none"><rect width="90" height="67" fill="#c4c6be"/><rect width="90" height="67" filter="url(#nz)" opacity=".12"/><rect width="90" height="67" filter="url(#nzm)" opacity=".1"/><g filter="url(#b04)"><rect x="21.5" y="0" width="1" height="67" fill="#8b8e86" opacity=".7"/><rect x="45" y="0" width="1" height="67" fill="#8b8e86" opacity=".7"/><rect x="67" y="0" width="1" height="67" fill="#8b8e86" opacity=".7"/><rect x="0" y="11" width="90" height="1" fill="#8b8e86" opacity=".7"/><rect x="0" y="23" width="90" height="1" fill="#8b8e86" opacity=".7"/><rect x="0" y="37.5" width="90" height="1" fill="#8b8e86" opacity=".7"/><rect x="0" y="52" width="90" height="1" fill="#8b8e86" opacity=".7"/></g></svg>
<div class="item" style="left:436px;top:375px;">concrete.cast-in-...</div>
<svg class="th" style="left:548px;top:277px" width="90" height="90" viewBox="0 0 90 90" preserveAspectRatio="none"><rect width="90" height="90" fill="#8c8a8c"/><g filter="url(#b3)"><rect x="30" y="-5" width="14" height="100" fill="#858386" opacity=".7"/><rect x="60" y="10" width="20" height="50" fill="#939193" opacity=".7"/><rect x="5" y="40" width="16" height="40" fill="#939092" opacity=".6"/></g><rect width="90" height="90" filter="url(#nzd)" opacity=".15"/></svg>
<div class="item" style="left:541px;top:375px;">concrete</div>
<svg class="th" style="left:653px;top:277px" width="90" height="90" viewBox="0 0 90 90" preserveAspectRatio="none"><rect width="90" height="90" fill="#a9aaa7"/><rect width="90" height="90" filter="url(#nzm)" opacity=".06"/><rect width="90" height="90" filter="url(#nz)" opacity=".14"/><rect width="90" height="90" filter="url(#nzw)" opacity=".14"/></svg>
<div class="item" style="left:646px;top:375px;letter-spacing:0.12px;">Concrete-rough</div>
<div class="abs" style="left:338px;top:425px;width:90px;height:2px;background:#6e6e6e;"></div>
<div class="abs" style="left:443px;top:425px;width:90px;height:2px;background:#1f1f1f;"></div>
<div class="abs" style="left:552px;top:425px;width:81px;height:2px;background:#000;"></div>
<div class="abs" style="left:657px;top:425px;width:81px;height:2px;background:#000;"></div>

<!-- name / type / template rows -->
<div class="lbl" style="left:119px;top:442px;"><u>N</u>ome:</div>
<div class="combo" style="left:214px;top:436px;width:520px;height:21px;background:#fff;"></div>
<div class="lbl" style="left:220px;top:442px;color:#000;letter-spacing:0.1px;">dirt1.jpg</div>
<div class="arrow" style="left:723px;top:446px;"></div>
<div class="lbl" style="left:119px;top:468px;"><u>T</u>ipo:</div>
<div class="combo" style="left:214px;top:464px;width:520px;height:20px;background:linear-gradient(180deg,#f4f4f4 0,#ebebeb 45%,#dcdcdc 55%,#cfcfcf 100%);"></div>
<div class="lbl" style="left:218px;top:468px;color:#000;letter-spacing:-0.15px;">Todos os arquivos (*.*)</div>
<div class="arrow" style="left:723px;top:473px;"></div>
<div class="lbl" style="left:119px;top:495px;letter-spacing:-0.22px;">Modelo de nome:</div>
<div class="combo" style="left:214px;top:493px;width:520px;height:20px;background:#fff;"></div>
<div class="abs" style="left:216px;top:496px;width:499px;height:15px;background:#575757;"></div>
<div class="arrow" style="left:723px;top:502px;border-top-color:#a6a6a6;"></div>
<div class="btn" style="left:743px;top:436px;width:24px;height:22px;line-height:19px;font-size:13px;color:#111;">+</div>
<div class="btn" style="left:775px;top:436px;width:75px;height:23px;line-height:21px;text-indent:-2px;letter-spacing:-0.1px;"><u>A</u>brir</div>
<div class="btn" style="left:775px;top:462px;width:75px;height:23px;line-height:21px;text-indent:-5px;letter-spacing:-0.35px;">Cancelar</div>
<!-- left buttons -->
<div class="btn" style="left:19px;top:527px;width:75px;height:23px;line-height:21px;letter-spacing:0.1px;text-indent:-3px;">Dispositivos...</div>
<div class="btn" style="left:19px;top:559px;width:75px;height:23px;line-height:21px;color:#101010;letter-spacing:0.22px;text-indent:-4px;">Configurar...</div>
<div class="btn" style="left:19px;top:588px;width:75px;height:23px;line-height:21px;letter-spacing:0.15px;text-indent:-2px;">Informações...</div>
<div class="btn" style="left:19px;top:614px;width:75px;height:23px;line-height:21px;letter-spacing:-0.4px;text-indent:-3px;">Vista</div>
<!-- Gama group -->
<div class="abs" style="left:101px;top:529px;width:182px;height:74px;box-sizing:border-box;border:1px solid #181818;box-shadow:1px 1px 0 rgba(255,255,255,.06);"></div>
<div class="lbl" style="left:109px;top:524px;background:#444;padding:0 4px 0 3px;letter-spacing:-0.8px;">Gama</div>
<div class="abs" style="left:101px;top:607px;width:182px;height:33px;box-sizing:border-box;border:1px solid #181818;box-shadow:1px 1px 0 rgba(255,255,255,.06);"></div>
<!-- radios -->
<svg class="abs" style="left:113px;top:547px" width="13" height="13" viewBox="0 0 13 13"><circle cx="6.300" cy="6.300" r="4.300" fill="#555"/><path d="M2.800 9.800A4.950 4.950 0 0 1 9.800 2.800" fill="none" stroke="#0a0a0a" stroke-width="1.500"/><path d="M9.800 2.800A4.950 4.950 0 0 1 2.800 9.800" fill="none" stroke="#5b5b5b" stroke-width="1.200"/><circle cx="6.300" cy="6.300" r="2.300" fill="#fbfbfb"/></svg>
<svg class="abs" style="left:113px;top:567px" width="13" height="13" viewBox="0 0 13 13"><circle cx="6.300" cy="6.300" r="4.300" fill="#555"/><path d="M2.800 9.800A4.950 4.950 0 0 1 9.800 2.800" fill="none" stroke="#0a0a0a" stroke-width="1.500"/><path d="M9.800 2.800A4.950 4.950 0 0 1 2.800 9.800" fill="none" stroke="#5b5b5b" stroke-width="1.200"/></svg>
<div class="lbl" style="left:131px;top:548px;letter-spacing:-0.13px;">Automático (recomendado)</div>
<div class="lbl" style="left:131px;top:568px;letter-spacing:-0.13px;">Substituir</div>
<!-- spinner -->
<div class="abs" style="left:185px;top:566px;width:57px;height:16px;box-sizing:border-box;border:2px solid #050505;border-right:1px solid #3a3a3a;border-bottom:1px solid #6a6a6a;background:#595959;"></div>
<div class="lbl" style="left:189px;top:568px;color:#141414;">1,0</div>
<div class="abs" style="left:243px;top:566px;width:11px;height:8px;box-sizing:border-box;border-right:1px solid #1c1c1c;border-bottom:1px solid #1c1c1c;background:#4f4f4f;"></div>
<div class="abs" style="left:243px;top:574px;width:11px;height:8px;box-sizing:border-box;border-right:1px solid #1c1c1c;border-bottom:1px solid #1c1c1c;background:#4f4f4f;"></div>
<svg class="abs" style="left:244px;top:568px" width="8" height="12" viewBox="0 0 8 12"><path d="M.8 4.200L4 1l3.200 3.200zM.8 8L4 11.200l3.200-3.200z" fill="#e6e6e6"/></svg>
<!-- checkboxes -->
<div class="abs" style="left:113px;top:615px;width:13px;height:13px;box-sizing:border-box;border:2px solid #080808;border-right:1px solid #363636;border-bottom:1px solid #363636;background:#565656;"></div>
<div class="lbl" style="left:130px;top:615px;letter-spacing:-0.3px;">Sequência</div>
<div class="abs" style="left:209px;top:615px;width:13px;height:13px;box-sizing:border-box;border:2px solid #080808;border-right:1px solid #363636;border-bottom:1px solid #363636;background:#565656;"></div>
<svg class="abs" style="left:211px;top:617px" width="10" height="10" viewBox="0 0 10 10"><path d="M1.200 4.200l2.300 2.500L8 1.500" fill="none" stroke="#f2f2f2" stroke-width="1.800"/></svg>
<div class="lbl" style="left:227px;top:615px;letter-spacing:-0.4px;">Visualizar</div>
<!-- mouse cursor -->
<svg class="abs" style="left:139px;top:608px" width="14" height="21" viewBox="0 0 14 21"><path d="M.7 1.200v15.600l3.700-3.500 2.500 5.900 2.300-1-2.500-5.800h5z" fill="#fff" stroke="#000" stroke-width="1" stroke-linejoin="round"/></svg>
<!-- preview -->
<div class="abs" style="left:293px;top:527px;width:147px;height:111px;box-sizing:border-box;border:1px solid #e8e8e8;background:#000;"></div>
<div class="abs" style="left:312px;top:528px;width:109px;height:109px;background:#fff;"></div>
<svg class="abs" style="left:312px;top:528px" width="109" height="109" viewBox="0 0 109 109" shape-rendering="crispEdges">
<rect x="37" y="48" width="2" height="2" fill="#c9c9c9"/><rect x="35" y="55" width="2" height="2" fill="#c9c9c9"/><rect x="36" y="55" width="2" height="2" fill="#c9c9c9"/><rect x="35" y="59" width="2" height="2" fill="#c9c9c9"/><rect x="38" y="49" width="2" height="2" fill="#c9c9c9"/><rect x="40" y="52" width="2" height="2" fill="#c9c9c9"/><rect x="33" y="59" width="2" height="2" fill="#c9c9c9"/><rect x="38" y="47" width="2" height="2" fill="#c9c9c9"/><rect x="37" y="55" width="2" height="2" fill="#c9c9c9"/><rect x="34" y="57" width="2" height="2" fill="#c9c9c9"/><rect x="37" y="56" width="2" height="2" fill="#c9c9c9"/><rect x="37" y="55" width="2" height="2" fill="#c9c9c9"/><rect x="40" y="49" width="2" height="2" fill="#c9c9c9"/><rect x="37" y="53" width="2" height="2" fill="#c9c9c9"/><rect x="36" y="57" width="2" height="2" fill="#c9c9c9"/><rect x="33" y="61" width="2" height="2" fill="#c9c9c9"/><rect x="39" y="52" width="1" height="1" fill="#c8c8c8"/><rect x="46" y="35" width="1" height="1" fill="#cccccc"/><rect x="38" y="55" width="1" height="1" fill="#cfcfcf"/><rect x="30" y="62" width="1" height="1" fill="#d8d8d8"/><rect x="42" y="27" width="1" height="1" fill="#d8d8d8"/><rect x="38" y="43" width="1" height="1" fill="#c8c8c8"/><rect x="41" y="43" width="1" height="1" fill="#e0e0e0"/><rect x="33" y="63" width="1" height="1" fill="#d8d8d8"/><rect x="33" y="59" width="1" height="1" fill="#d8d8d8"/><rect x="41" y="43" width="1" height="1" fill="#cfcfcf"/><rect x="38" y="44" width="1" height="1" fill="#c2c2c2"/><rect x="40" y="42" width="1" height="1" fill="#cfcfcf"/><rect x="42" y="40" width="1" height="1" fill="#cccccc"/><rect x="39" y="45" width="1" height="1" fill="#e0e0e0"/><rect x="47" y="30" width="1" height="1" fill="#e2e2e2"/><rect x="35" y="58" width="1" height="1" fill="#c8c8c8"/><rect x="38" y="33" width="1" height="1" fill="#e2e2e2"/><rect x="37" y="51" width="1" height="1" fill="#c2c2c2"/><rect x="36" y="63" width="1" height="1" fill="#cccccc"/><rect x="46" y="40" width="1" height="1" fill="#cccccc"/><rect x="40" y="40" width="1" height="1" fill="#c2c2c2"/><rect x="40" y="36" width="1" height="1" fill="#e2e2e2"/><rect x="36" y="57" width="1" height="1" fill="#d6d6d6"/><rect x="35" y="61" width="1" height="1" fill="#e2e2e2"/><rect x="31" y="62" width="1" height="1" fill="#d8d8d8"/><rect x="45" y="32" width="1" height="1" fill="#e2e2e2"/><rect x="44" y="26" width="1" height="1" fill="#d8d8d8"/><rect x="36" y="58" width="1" height="1" fill="#cfcfcf"/><rect x="34" y="64" width="1" height="1" fill="#e2e2e2"/><rect x="31" y="67" width="1" height="1" fill="#cccccc"/><rect x="40" y="52" width="1" height="1" fill="#e0e0e0"/><rect x="41" y="36" width="1" height="1" fill="#cccccc"/><rect x="41" y="36" width="1" height="1" fill="#d8d8d8"/><rect x="39" y="45" width="1" height="1" fill="#cfcfcf"/><rect x="41" y="47" width="1" height="1" fill="#c8c8c8"/><rect x="34" y="67" width="1" height="1" fill="#e2e2e2"/><rect x="43" y="41" width="1" height="1" fill="#e2e2e2"/><rect x="36" y="60" width="1" height="1" fill="#e2e2e2"/><rect x="41" y="46" width="1" height="1" fill="#c2c2c2"/><rect x="39" y="45" width="1" height="1" fill="#d6d6d6"/><rect x="38" y="37" width="1" height="1" fill="#cccccc"/><rect x="37" y="63" width="1" height="1" fill="#d8d8d8"/><rect x="46" y="36" width="1" height="1" fill="#e2e2e2"/><rect x="48" y="26" width="1" height="1" fill="#e2e2e2"/><rect x="41" y="43" width="1" height="1" fill="#cfcfcf"/><rect x="40" y="42" width="1" height="1" fill="#cfcfcf"/><rect x="42" y="37" width="1" height="1" fill="#d8d8d8"/><rect x="45" y="31" width="1" height="1" fill="#d8d8d8"/><rect x="34" y="56" width="1" height="1" fill="#c8c8c8"/><rect x="41" y="35" width="1" height="1" fill="#cccccc"/><rect x="39" y="31" width="1" height="1" fill="#e2e2e2"/><rect x="43" y="31" width="1" height="1" fill="#d8d8d8"/><rect x="39" y="46" width="1" height="1" fill="#e0e0e0"/><rect x="40" y="33" width="1" height="1" fill="#cccccc"/><rect x="32" y="57" width="1" height="1" fill="#cccccc"/><rect x="41" y="36" width="1" height="1" fill="#cccccc"/><rect x="39" y="47" width="1" height="1" fill="#c2c2c2"/><rect x="39" y="45" width="1" height="1" fill="#cfcfcf"/><rect x="36" y="57" width="1" height="1" fill="#c2c2c2"/><rect x="46" y="37" width="1" height="1" fill="#e2e2e2"/><rect x="40" y="41" width="1" height="1" fill="#d8d8d8"/><rect x="35" y="61" width="1" height="1" fill="#d8d8d8"/><rect x="41" y="43" width="1" height="1" fill="#cfcfcf"/><rect x="44" y="35" width="1" height="1" fill="#e2e2e2"/><rect x="40" y="43" width="1" height="1" fill="#e0e0e0"/><rect x="41" y="49" width="1" height="1" fill="#d6d6d6"/><rect x="41" y="28" width="1" height="1" fill="#cccccc"/><rect x="40" y="46" width="1" height="1" fill="#e0e0e0"/><rect x="33" y="57" width="1" height="1" fill="#cfcfcf"/><rect x="41" y="39" width="1" height="1" fill="#d8d8d8"/><rect x="39" y="44" width="1" height="1" fill="#d6d6d6"/><rect x="39" y="38" width="1" height="1" fill="#d8d8d8"/><rect x="46" y="32" width="1" height="1" fill="#d8d8d8"/><rect x="39" y="35" width="1" height="1" fill="#d8d8d8"/><rect x="38" y="45" width="1" height="1" fill="#e0e0e0"/><rect x="36" y="57" width="1" height="1" fill="#c2c2c2"/><rect x="40" y="45" width="1" height="1" fill="#d6d6d6"/><rect x="46" y="29" width="1" height="1" fill="#e2e2e2"/><rect x="38" y="60" width="1" height="1" fill="#d8d8d8"/><rect x="40" y="39" width="1" height="1" fill="#e2e2e2"/><rect x="44" y="34" width="1" height="1" fill="#cccccc"/><rect x="40" y="41" width="1" height="1" fill="#d8d8d8"/><rect x="46" y="34" width="1" height="1" fill="#e2e2e2"/><rect x="46" y="34" width="1" height="1" fill="#d8d8d8"/><rect x="34" y="58" width="1" height="1" fill="#d6d6d6"/><rect x="39" y="47" width="1" height="1" fill="#d6d6d6"/><rect x="31" y="64" width="1" height="1" fill="#d8d8d8"/><rect x="37" y="48" width="1" height="1" fill="#c8c8c8"/><rect x="37" y="59" width="1" height="1" fill="#d8d8d8"/><rect x="34" y="66" width="1" height="1" fill="#d8d8d8"/><rect x="38" y="53" width="1" height="1" fill="#d6d6d6"/><rect x="37" y="47" width="1" height="1" fill="#c2c2c2"/><rect x="43" y="38" width="1" height="1" fill="#cccccc"/><rect x="37" y="56" width="1" height="1" fill="#c8c8c8"/><rect x="42" y="39" width="1" height="1" fill="#d8d8d8"/><rect x="36" y="60" width="1" height="1" fill="#e2e2e2"/><rect x="40" y="31" width="1" height="1" fill="#cccccc"/><rect x="33" y="58" width="1" height="1" fill="#d8d8d8"/><rect x="45" y="30" width="1" height="1" fill="#e2e2e2"/><rect x="39" y="39" width="1" height="1" fill="#e2e2e2"/><rect x="40" y="45" width="1" height="1" fill="#c8c8c8"/><rect x="45" y="28" width="1" height="1" fill="#cccccc"/><rect x="41" y="44" width="1" height="1" fill="#c2c2c2"/><rect x="36" y="58" width="1" height="1" fill="#e2e2e2"/><rect x="43" y="41" width="1" height="1" fill="#d6d6d6"/><rect x="44" y="38" width="1" height="1" fill="#cccccc"/><rect x="48" y="42" width="1" height="1" fill="#d8d8d8"/><rect x="47" y="33" width="1" height="1" fill="#e2e2e2"/><rect x="41" y="47" width="1" height="1" fill="#c2c2c2"/><rect x="43" y="30" width="1" height="1" fill="#d8d8d8"/><rect x="37" y="53" width="1" height="1" fill="#c4c4c4"/><rect x="37" y="58" width="1" height="1" fill="#c9c9c9"/><rect x="35" y="57" width="1" height="1" fill="#cdcdcd"/><rect x="36" y="55" width="1" height="1" fill="#c9c9c9"/><rect x="36" y="57" width="1" height="1" fill="#c9c9c9"/><rect x="34" y="57" width="1" height="1" fill="#cdcdcd"/><rect x="36" y="51" width="1" height="1" fill="#c4c4c4"/><rect x="38" y="58" width="1" height="1" fill="#c4c4c4"/><rect x="36" y="55" width="1" height="1" fill="#c4c4c4"/><rect x="34" y="60" width="1" height="1" fill="#c4c4c4"/><rect x="35" y="51" width="1" height="1" fill="#c4c4c4"/><rect x="36" y="48" width="1" height="1" fill="#cdcdcd"/><rect x="35" y="57" width="1" height="1" fill="#c9c9c9"/><rect x="37" y="60" width="1" height="1" fill="#cdcdcd"/><rect x="37" y="61" width="1" height="1" fill="#cdcdcd"/><rect x="39" y="50" width="1" height="1" fill="#cdcdcd"/><rect x="37" y="49" width="1" height="1" fill="#cdcdcd"/><rect x="38" y="48" width="1" height="1" fill="#c4c4c4"/><rect x="39" y="49" width="1" height="1" fill="#cdcdcd"/><rect x="37" y="48" width="1" height="1" fill="#c4c4c4"/><rect x="37" y="55" width="1" height="1" fill="#cdcdcd"/><rect x="36" y="56" width="1" height="1" fill="#c9c9c9"/><rect x="35" y="52" width="1" height="1" fill="#cdcdcd"/><rect x="35" y="53" width="1" height="1" fill="#c9c9c9"/><rect x="40" y="54" width="1" height="1" fill="#cdcdcd"/><rect x="41" y="50" width="1" height="1" fill="#c4c4c4"/><rect x="36" y="53" width="1" height="1" fill="#cdcdcd"/><rect x="33" y="55" width="1" height="1" fill="#c9c9c9"/><rect x="35" y="62" width="1" height="1" fill="#c4c4c4"/><rect x="39" y="42" width="1" height="1" fill="#c9c9c9"/><rect x="37" y="53" width="1" height="1" fill="#cdcdcd"/><rect x="36" y="55" width="1" height="1" fill="#cdcdcd"/><rect x="36" y="53" width="1" height="1" fill="#c4c4c4"/><rect x="34" y="60" width="1" height="1" fill="#cdcdcd"/><rect x="34" y="59" width="1" height="1" fill="#c4c4c4"/><rect x="34" y="55" width="1" height="1" fill="#cdcdcd"/><rect x="37" y="56" width="1" height="1" fill="#c9c9c9"/><rect x="35" y="59" width="1" height="1" fill="#c9c9c9"/><rect x="33" y="56" width="1" height="1" fill="#cdcdcd"/><rect x="35" y="66" width="1" height="1" fill="#c9c9c9"/><rect x="38" y="55" width="1" height="1" fill="#cdcdcd"/><rect x="39" y="53" width="1" height="1" fill="#c9c9c9"/><rect x="32" y="61" width="1" height="1" fill="#c4c4c4"/><rect x="37" y="55" width="1" height="1" fill="#cdcdcd"/><rect x="33" y="52" width="1" height="1" fill="#c4c4c4"/><rect x="84" y="24" width="1" height="1" fill="#dcdcdc"/><rect x="86" y="30" width="1" height="1" fill="#ececec"/><rect x="84" y="24" width="1" height="1" fill="#ececec"/><rect x="81" y="20" width="1" height="1" fill="#ececec"/><rect x="80" y="20" width="1" height="1" fill="#d2d2d2"/><rect x="90" y="31" width="1" height="1" fill="#dcdcdc"/><rect x="88" y="32" width="1" height="1" fill="#ececec"/><rect x="82" y="21" width="1" height="1" fill="#ececec"/><rect x="87" y="27" width="1" height="1" fill="#dcdcdc"/><rect x="87" y="32" width="1" height="1" fill="#e4e4e4"/><rect x="88" y="32" width="1" height="1" fill="#d2d2d2"/><rect x="87" y="28" width="1" height="1" fill="#ececec"/><rect x="91" y="30" width="1" height="1" fill="#dcdcdc"/><rect x="77" y="13" width="1" height="1" fill="#e4e4e4"/><rect x="85" y="26" width="1" height="1" fill="#e4e4e4"/><rect x="77" y="18" width="1" height="1" fill="#d2d2d2"/><rect x="87" y="27" width="1" height="1" fill="#e4e4e4"/><rect x="79" y="19" width="1" height="1" fill="#e4e4e4"/><rect x="87" y="26" width="1" height="1" fill="#ececec"/><rect x="82" y="24" width="1" height="1" fill="#ececec"/><rect x="81" y="21" width="1" height="1" fill="#e4e4e4"/><rect x="82" y="21" width="1" height="1" fill="#d2d2d2"/><rect x="87" y="29" width="1" height="1" fill="#ececec"/><rect x="81" y="20" width="1" height="1" fill="#d2d2d2"/><rect x="82" y="21" width="1" height="1" fill="#d2d2d2"/><rect x="76" y="16" width="1" height="1" fill="#e4e4e4"/><rect x="78" y="15" width="1" height="1" fill="#ececec"/><rect x="81" y="24" width="1" height="1" fill="#dcdcdc"/><rect x="76" y="17" width="1" height="1" fill="#ececec"/><rect x="89" y="31" width="1" height="1" fill="#ececec"/><rect x="90" y="32" width="1" height="1" fill="#e4e4e4"/><rect x="79" y="17" width="1" height="1" fill="#ececec"/><rect x="77" y="15" width="1" height="1" fill="#e4e4e4"/><rect x="81" y="17" width="1" height="1" fill="#d2d2d2"/><rect x="88" y="30" width="1" height="1" fill="#ececec"/><rect x="86" y="27" width="1" height="1" fill="#e4e4e4"/><rect x="82" y="23" width="1" height="1" fill="#dcdcdc"/><rect x="85" y="24" width="1" height="1" fill="#d2d2d2"/><rect x="86" y="24" width="1" height="1" fill="#e4e4e4"/><rect x="85" y="24" width="1" height="1" fill="#d2d2d2"/><rect x="15" y="26" width="1" height="1" fill="#dddddd"/><rect x="68" y="15" width="1" height="1" fill="#e6e6e6"/><rect x="70" y="93" width="1" height="1" fill="#e6e6e6"/><rect x="54" y="72" width="1" height="1" fill="#dddddd"/><rect x="48" y="71" width="1" height="1" fill="#e6e6e6"/><rect x="11" y="35" width="1" height="1" fill="#dddddd"/><rect x="16" y="54" width="1" height="1" fill="#e6e6e6"/><rect x="38" y="83" width="1" height="1" fill="#e6e6e6"/><rect x="52" y="32" width="1" height="1" fill="#ededed"/><rect x="20" y="65" width="1" height="1" fill="#dddddd"/><rect x="27" y="29" width="1" height="1" fill="#ededed"/><rect x="92" y="13" width="1" height="1" fill="#dddddd"/><rect x="23" y="44" width="1" height="1" fill="#e6e6e6"/><rect x="12" y="63" width="1" height="1" fill="#ededed"/><rect x="15" y="14" width="1" height="1" fill="#ededed"/><rect x="50" y="74" width="1" height="1" fill="#ededed"/><rect x="76" y="100" width="1" height="1" fill="#e6e6e6"/><rect x="40" y="25" width="1" height="1" fill="#dddddd"/><rect x="77" y="11" width="1" height="1" fill="#dddddd"/><rect x="75" y="85" width="1" height="1" fill="#ededed"/><rect x="50" y="18" width="1" height="1" fill="#e6e6e6"/><rect x="35" y="40" width="1" height="1" fill="#e6e6e6"/><rect x="61" y="78" width="1" height="1" fill="#ededed"/><rect x="42" y="84" width="1" height="1" fill="#ededed"/><rect x="18" y="73" width="1" height="1" fill="#e6e6e6"/><rect x="44" y="93" width="1" height="1" fill="#e6e6e6"/><rect x="39" y="76" width="1" height="1" fill="#ededed"/><rect x="13" y="46" width="1" height="1" fill="#dddddd"/><rect x="79" y="12" width="1" height="1" fill="#e6e6e6"/><rect x="52" y="82" width="1" height="1" fill="#e6e6e6"/><rect x="33" y="77" width="1" height="1" fill="#dddddd"/><rect x="41" y="33" width="1" height="1" fill="#dddddd"/><rect x="14" y="77" width="1" height="1" fill="#dddddd"/><rect x="38" y="33" width="1" height="1" fill="#e6e6e6"/><rect x="75" y="63" width="1" height="1" fill="#dddddd"/><rect x="95" y="14" width="1" height="1" fill="#e6e6e6"/><rect x="20" y="74" width="1" height="1" fill="#ededed"/><rect x="96" y="44" width="1" height="1" fill="#ededed"/><rect x="92" y="83" width="1" height="1" fill="#e6e6e6"/><rect x="94" y="25" width="1" height="1" fill="#dddddd"/><rect x="37" y="72" width="1" height="1" fill="#e6e6e6"/><rect x="65" y="38" width="1" height="1" fill="#ededed"/><rect x="51" y="80" width="1" height="1" fill="#dddddd"/><rect x="17" y="26" width="1" height="1" fill="#e6e6e6"/><rect x="32" y="14" width="1" height="1" fill="#e6e6e6"/><rect x="53" y="58" width="1" height="1" fill="#e6e6e6"/><rect x="98" y="89" width="1" height="1" fill="#e6e6e6"/><rect x="34" y="16" width="1" height="1" fill="#e6e6e6"/><rect x="48" y="99" width="1" height="1" fill="#ededed"/><rect x="26" y="20" width="1" height="1" fill="#ededed"/><rect x="66" y="70" width="1" height="1" fill="#dddddd"/><rect x="58" y="79" width="1" height="1" fill="#e6e6e6"/><rect x="80" y="35" width="1" height="1" fill="#ededed"/><rect x="61" y="42" width="1" height="1" fill="#dddddd"/><rect x="33" y="48" width="1" height="1" fill="#e6e6e6"/><rect x="32" y="22" width="1" height="1" fill="#dddddd"/><rect x="27" y="14" width="1" height="1" fill="#ededed"/><rect x="99" y="55" width="1" height="1" fill="#e6e6e6"/><rect x="68" y="17" width="1" height="1" fill="#ededed"/><rect x="99" y="17" width="1" height="1" fill="#ededed"/><rect x="63" y="55" width="1" height="1" fill="#dddddd"/><rect x="60" y="59" width="1" height="1" fill="#dddddd"/><rect x="58" y="63" width="1" height="1" fill="#cccccc"/><rect x="70" y="58" width="1" height="1" fill="#d4d4d4"/><rect x="45" y="74" width="1" height="1" fill="#dddddd"/><rect x="46" y="50" width="1" height="1" fill="#cccccc"/><rect x="62" y="58" width="1" height="1" fill="#cccccc"/><rect x="56" y="51" width="1" height="1" fill="#d4d4d4"/><rect x="55" y="64" width="1" height="1" fill="#d4d4d4"/><rect x="61" y="60" width="1" height="1" fill="#cccccc"/><rect x="54" y="55" width="1" height="1" fill="#d4d4d4"/><rect x="62" y="51" width="1" height="1" fill="#dddddd"/><rect x="61" y="68" width="1" height="1" fill="#d4d4d4"/><rect x="68" y="62" width="1" height="1" fill="#dddddd"/><rect x="62" y="62" width="1" height="1" fill="#dddddd"/><rect x="55" y="55" width="1" height="1" fill="#cccccc"/><rect x="63" y="63" width="1" height="1" fill="#cccccc"/><rect x="54" y="90" width="1" height="1" fill="#cccccc"/><rect x="50" y="83" width="1" height="1" fill="#dddddd"/><rect x="57" y="39" width="1" height="1" fill="#dddddd"/><rect x="42" y="70" width="1" height="1" fill="#dddddd"/><rect x="52" y="52" width="1" height="1" fill="#dddddd"/><rect x="58" y="61" width="1" height="1" fill="#d4d4d4"/><rect x="43" y="69" width="1" height="1" fill="#dddddd"/><rect x="50" y="56" width="1" height="1" fill="#d4d4d4"/><rect x="84" y="61" width="1" height="1" fill="#ececec"/><rect x="86" y="66" width="1" height="1" fill="#ececec"/><rect x="82" y="63" width="1" height="1" fill="#ececec"/><rect x="86" y="57" width="1" height="1" fill="#ececec"/><rect x="85" y="63" width="1" height="1" fill="#ececec"/><rect x="84" y="62" width="1" height="1" fill="#ececec"/><rect x="85" y="62" width="1" height="1" fill="#ececec"/><rect x="84" y="53" width="1" height="1" fill="#ececec"/><rect x="84" y="57" width="1" height="1" fill="#ececec"/><rect x="84" y="59" width="1" height="1" fill="#ececec"/><rect x="85" y="58" width="1" height="1" fill="#ececec"/><rect x="82" y="56" width="1" height="1" fill="#ececec"/><rect x="86" y="63" width="1" height="1" fill="#ececec"/><rect x="83" y="52" width="1" height="1" fill="#ececec"/><rect x="46" y="26" width="1" height="1" fill="#2a2a2a"/><rect x="74" y="27" width="1" height="1" fill="#2a2a2a"/><rect x="89" y="30" width="1" height="1" fill="#2a2a2a"/><rect x="44" y="49" width="1" height="1" fill="#2a2a2a"/><rect x="47" y="60" width="1" height="1" fill="#2a2a2a"/><rect x="36" y="64" width="1" height="1" fill="#2a2a2a"/><rect x="30" y="68" width="1" height="1" fill="#2a2a2a"/><rect x="80" y="68" width="1" height="1" fill="#2a2a2a"/><rect x="15" y="97" width="1" height="1" fill="#2a2a2a"/>
</svg>
<!-- status text -->
<div class="lbl" style="left:19px;top:651px;letter-spacing:-0.22px;">Estatísticas:</div><div class="lbl" style="left:83px;top:651px;letter-spacing:-0.13px;">256x256, 8 bits em tons de cinza/canal - Imagem única</div>
<div class="lbl" style="left:19px;top:669px;letter-spacing:-0.25px;">Localização:</div><div class="lbl" style="left:83px;top:669px;letter-spacing:-0.02px;">C:\Users\xu\Desktop\3ds Max 2016 Tutorials Scene Files\scen...\dirt1.jpg</div>
<!-- resize grip -->
<svg class="abs" style="left:857px;top:677px" width="12" height="12" viewBox="0 0 12 12"><g fill="#000"><rect x="9" y="1" width="2" height="2"/><rect x="5" y="5" width="2" height="2"/><rect x="9" y="5" width="2" height="2"/><rect x="1" y="9" width="2" height="2"/><rect x="5" y="9" width="2" height="2"/><rect x="9" y="9" width="2" height="2"/></g></svg>

</div>
</body>
</html>
